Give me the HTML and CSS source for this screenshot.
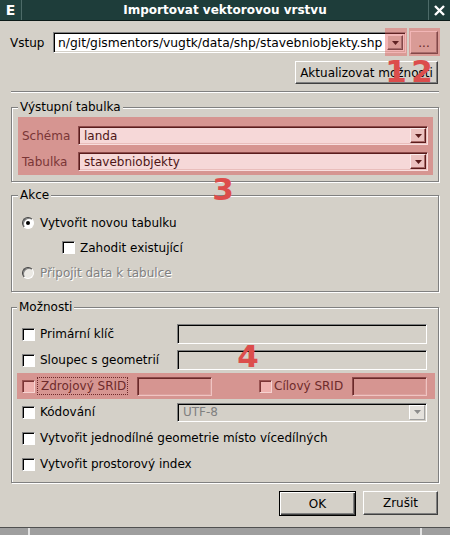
FILE: index.html
```html
<!DOCTYPE html>
<html lang="cs">
<head>
<meta charset="utf-8">
<title>Importovat vektorovou vrstvu</title>
<link rel="stylesheet" href="styles.css">
</head>
<body>
<div class="window">
  <div class="titlebar">
    <div class="tb-icon">E</div>
    <div class="tb-title">Importovat vektorovou vrstvu</div>
    <div class="tb-close">
      <svg width="11" height="11" viewBox="0 0 11 11"><path d="M1 1 L10 10 M10 1 L1 10" stroke="#fff" stroke-width="2.4" fill="none"/></svg>
    </div>
  </div>

  <div class="dialog">
    <div class="row-input">
      <span class="lbl-vstup">Vstup</span>
      <div class="combo combo-edit">
        <span class="combo-text">n/git/gismentors/vugtk/data/shp/stavebniobjekty.shp</span>
        <span class="arrow-btn"><svg width="7" height="4" viewBox="0 0 7 4"><path d="M0 0 H7 L3.5 4 Z" fill="#000"/></svg></span>
      </div>
      <button class="btn btn-dots">...</button>
    </div>

    <div class="row-update">
      <button class="btn btn-update">Aktualizovat možnosti</button>
    </div>

    <div class="sep"></div>

    <fieldset class="group g-out">
      <legend>Výstupní tabulka</legend>
      <div class="hl-block">
        <div class="frow">
          <span class="flabel">Schéma</span>
          <div class="combo combo-pink">
            <span class="combo-text">landa</span>
            <span class="arrow-btn arrow-pink"><svg width="7" height="4" viewBox="0 0 7 4"><path d="M0 0 H7 L3.5 4 Z" fill="#5a1c1c"/></svg></span>
          </div>
        </div>
        <div class="frow">
          <span class="flabel">Tabulka</span>
          <div class="combo combo-pink">
            <span class="combo-text">stavebniobjekty</span>
            <span class="arrow-btn arrow-pink"><svg width="7" height="4" viewBox="0 0 7 4"><path d="M0 0 H7 L3.5 4 Z" fill="#5a1c1c"/></svg></span>
          </div>
        </div>
      </div>
    </fieldset>

    <fieldset class="group g-akce">
      <legend>Akce</legend>
      <div class="arow"><span class="radio checked"></span><span>Vytvořit novou tabulku</span></div>
      <div class="arow indent"><span class="check"></span><span>Zahodit existující</span></div>
      <div class="arow disabled"><span class="radio dis"></span><span>Připojit data k tabulce</span></div>
    </fieldset>

    <fieldset class="group g-opt">
      <legend>Možnosti</legend>
      <div class="orow"><span class="check"></span><span>Primární klíč</span><span class="ledit wide"></span></div>
      <div class="orow"><span class="check"></span><span>Sloupec s geometrií</span><span class="ledit wide"></span></div>
      <div class="orow hl">
        <span class="check check-pink"></span>
        <span class="focus-lbl">Zdrojový SRID</span>
        <span class="ledit ledit-pink srid-src"></span>
        <div class="srid-dst">
          <span class="check check-pink"></span>
          <span class="dst-lbl">Cílový SRID</span>
          <span class="ledit ledit-pink"></span>
        </div>
      </div>
      <div class="orow">
        <span class="check"></span><span>Kódování</span>
        <div class="combo combo-dis">
          <span class="combo-text">UTF-8</span>
          <span class="arrow-btn arrow-dis"><svg width="7" height="4" viewBox="0 0 7 4"><path d="M0 0 H7 L3.5 4 Z" fill="#8c8c8c"/></svg></span>
        </div>
      </div>
      <div class="orow"><span class="check"></span><span>Vytvořit jednodílné geometrie místo vícedílných</span></div>
      <div class="orow"><span class="check"></span><span>Vytvořit prostorový index</span></div>
    </fieldset>

    <div class="buttons">
      <button class="btn btn-ok">OK</button>
      <button class="btn btn-cancel">Zrušit</button>
    </div>
  </div>

  <div class="bottombar">
    <div class="bb-seg bb-a"></div>
    <div class="bb-seg bb-b"></div>
    <div class="bb-seg bb-c"></div>
  </div>

  <div class="ann-box ann-box1"></div>
  <div class="ann-box ann-box2"></div>
  <span class="ann-num ann-1">1</span>
  <span class="ann-num ann-2">2</span>
  <span class="ann-num ann-3">3</span>
  <span class="ann-num ann-4">4</span>
</div>
</body>
</html>
```

FILE: styles.css
```css
* { box-sizing: border-box; }
html, body { margin: 0; padding: 0; }
body {
  width: 450px; height: 535px; overflow: hidden;
  background: #d4d0c8;
  font-family: "DejaVu Sans", "Liberation Sans", sans-serif;
  font-size: 12px; color: #000;
}
.window { position: relative; width: 450px; height: 535px; display: flex; flex-direction: column; }

/* title bar */
.titlebar { flex: none; height: 21px; display: flex; background: #1e3d3a; border-bottom: 1px solid #0b1a18; color: #fff; }
.tb-icon { width: 22px; border-right: 1px solid #4d6b68; background: #22433f; display: flex; align-items: center; justify-content: center; font-weight: bold; font-size: 14px; }
.tb-title { flex: 1; text-align: center; font-weight: bold; font-size: 12px; line-height: 20px; }
.tb-close { width: 22px; border-left: 1px solid #4d6b68; display: flex; align-items: center; justify-content: center; }

.dialog { flex: 1; display: flex; flex-direction: column; }

/* buttons */
.btn {
  font: inherit; color: #000; background: #d4d0c8; padding: 0; margin: 0;
  border: 1px solid; border-color: #fff #404040 #404040 #fff;
  box-shadow: inset -1px -1px 0 #808080;
}

/* input row */
.row-input { display: flex; align-items: center; height: 23px; margin-top: 10px; padding-left: 10px; }
.lbl-vstup { width: 43px; }
.combo {
  display: flex; align-items: center;
  border: 1px solid; border-color: #808080 #fff #fff #808080;
  box-shadow: inset 1px 1px 0 #000, inset -1px -1px 0 #d4d0c8;
  padding: 0 2px 0 4px; overflow: hidden;
}
.combo-text { flex: 1; white-space: nowrap; overflow: hidden; }
.combo-edit { width: 353px; height: 21px; background: #fff; font-size: 12.3px; }
.arrow-btn {
  flex: none; width: 16px; height: 15px; display: flex; align-items: center; justify-content: center;
  background: #d4d0c8; border: 1px solid; border-color: #fff #404040 #404040 #fff;
  box-shadow: inset -1px -1px 0 #808080;
}
.btn-dots { width: 28px; height: 23px; margin-left: 4px; }

.row-update { display: flex; justify-content: flex-end; padding-right: 12px; margin-top: 7px; }
.btn-update { width: 143px; height: 23px; }

.sep { margin: 7px 11px 0; border-top: 1px solid #808080; border-bottom: 1px solid #fff; }

/* groups */
.group {
  margin: 7px 11px 0; min-width: 0;
  border: 1px solid #808080;
  box-shadow: inset 1px 1px 0 #fff, 1px 1px 0 #fff;
}
.group legend { padding: 0 2px; line-height: 14px; background: #d4d0c8; }
.g-out { padding: 3px 5px 6px 6px; }
.g-akce { margin-top: 6px; padding: 8px 5px 6px 6px; }
.g-opt { margin-top: 8px; padding: 7px 3px 5px 5px; }

/* highlighted output block */
.hl-block { background: #d69591; padding: 9px 5px 4px 4px; display: flex; flex-direction: column; gap: 7px; }
.frow { display: flex; align-items: center; height: 19px; }
.flabel { width: 56px; color: #7a3636; }
.combo-pink {
  width: 350px; height: 19px; background: #f6d8d8; color: #4e1616; padding-left: 5px; padding-right: 1px;
  border-color: #8c4a4a #f8dede #f8dede #8c4a4a;
  box-shadow: inset 1px 1px 0 #5a1c1c, inset -1px -1px 0 #e9bdbb;
}
.arrow-pink {
  height: 15px; background: #ecc2c0;
  border-color: #fbeaea #5a1c1c #5a1c1c #fbeaea;
  box-shadow: inset -1px -1px 0 #a86a68;
}

/* akce */
.arow { display: flex; align-items: center; height: 25px; padding-left: 4px; }
.arow.indent { padding-left: 44px; }
.arow.disabled { color: #808080; text-shadow: 1px 1px 0 #fff; }
.radio {
  flex: none; width: 12px; height: 12px; margin-right: 6px; border-radius: 50%;
  background: #fff; border: 1px solid; border-color: #404040 #fff #fff #404040;
  box-shadow: inset 1px 1px 0 #808080;
  display: flex; align-items: center; justify-content: center;
}
.radio.checked::after { content: ""; width: 4px; height: 4px; border-radius: 50%; background: #000; }
.radio.dis { background: #ebe9e4; }

.check {
  flex: none; width: 13px; height: 13px; margin-right: 5px; background: #fff;
  border: 1px solid; border-color: #808080 #fff #fff #808080;
  box-shadow: inset 1px 1px 0 #000;
}

/* options */
.orow { display: flex; align-items: center; height: 26px; padding: 0 8px 0 5px; }
.orow.hl { background: #d69591; color: #6e2b2b; }
.ledit {
  flex: none; display: block; height: 20px;
  border: 1px solid; border-color: #808080 #fff #fff #808080;
  box-shadow: inset 1px 1px 0 #000, inset -1px -1px 0 #d4d0c8;
}
.ledit.wide { margin-left: auto; width: 250px; }
.ledit-pink {
  width: 75px; height: 19px;
  border-color: #8c4a4a #f0c4c2 #f0c4c2 #8c4a4a;
  box-shadow: inset 1px 1px 0 #6a2828, inset -1px -1px 0 #dba19e;
}
.check-pink {
  background: #eeb1ae; border-color: #9a5452 #f6d2d0 #f6d2d0 #9a5452;
  box-shadow: inset 1px 1px 0 #7a3434;
}
.orow.hl .check-pink { margin-right: 2px; }
.focus-lbl { width: 91px; height: 18px; border: 1px dotted #6e2b2b; padding-left: 3px; line-height: 16px; }
.srid-src { margin-left: 9px; }
.srid-dst { margin-left: auto; display: flex; align-items: center; }
.srid-dst .check-pink { margin-right: 5px; }
.dst-lbl { width: 78px; }

.combo-dis { margin-left: auto; width: 250px; height: 19px; background: #d4d0c8; color: #808080; padding-left: 5px; padding-right: 1px; }
.arrow-dis { height: 15px; background: #e4e1dc; border-color: #fff #a0a0a0 #a0a0a0 #fff; box-shadow: none; }

/* bottom buttons */
.buttons { display: flex; justify-content: flex-end; align-items: flex-start; gap: 7px; padding-right: 12px; margin-top: 8px; }
.btn-ok {
  width: 77px; height: 25px; border: 1px solid #000;
  box-shadow: inset 1px 1px 0 #fff, inset -1px -1px 0 #404040, inset -2px -2px 0 #808080;
}
.btn-cancel { width: 75px; height: 24px; }

/* bottom frame */
.bottombar { flex: none; height: 8px; display: flex; background: #9f9f9f; border-top: 1px solid #505050; }
.bb-a { width: 28px; }
.bb-b { flex: 1; border-left: 2px solid #e2e2e2; }
.bb-c { width: 30px; border-left: 2px solid #e2e2e2; }

/* annotations */
.ann-box { position: absolute; top: 28px; height: 28px; background: rgba(225, 80, 80, 0.42); }
.ann-box1 { left: 385px; width: 22px; }
.ann-box2 { left: 409px; width: 31px; }
.ann-num {
  position: absolute; width: 30px; text-align: center;
  font-family: "DejaVu Sans", sans-serif; font-weight: bold; font-size: 31px; line-height: 31px;
  color: #dc4d4c;
}
.ann-1 { left: 381px; top: 56px; }
.ann-2 { left: 407px; top: 56px; }
.ann-3 { left: 208px; top: 174px; }
.ann-4 { left: 233px; top: 341px; }
```
